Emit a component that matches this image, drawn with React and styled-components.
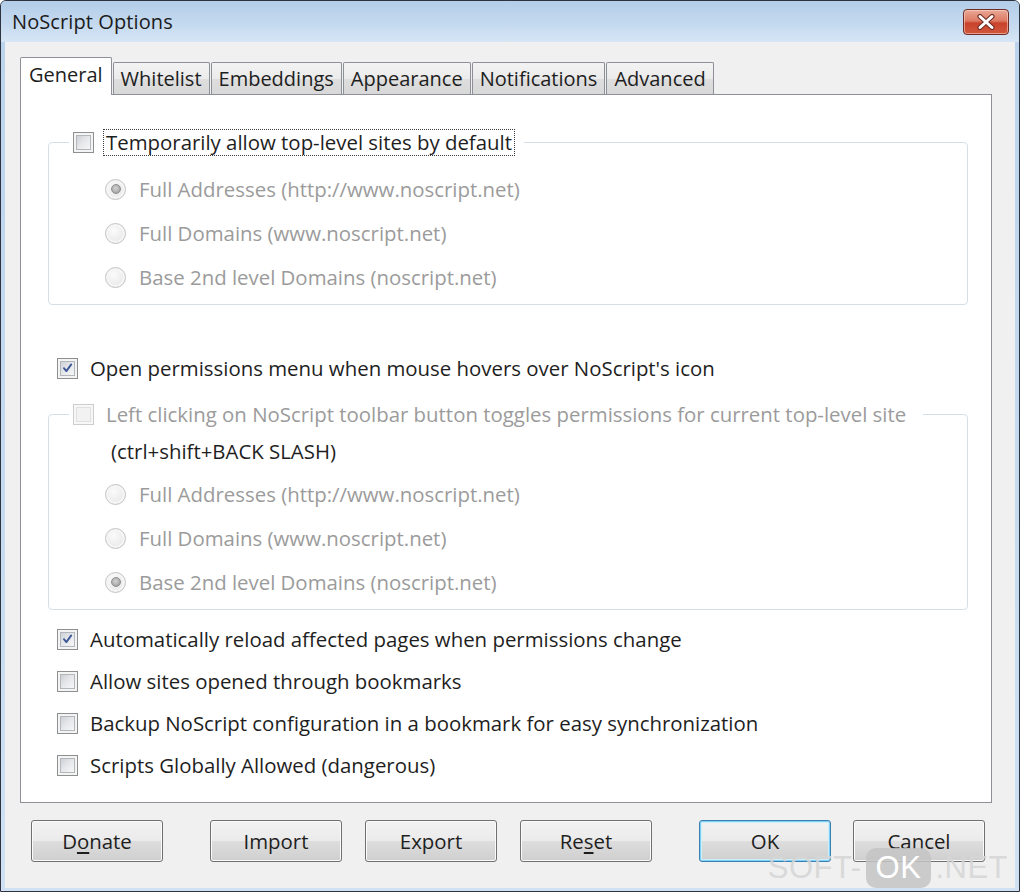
import React from "react";
import styled, { createGlobalStyle, css } from "styled-components";

const GlobalStyle = createGlobalStyle`
  html, body {
    margin: 0;
    padding: 0;
    background: #ffffff;
  }
  * {
    box-sizing: border-box;
  }
`;

const UI_FONT = `"Open Sans", "Noto Sans", "DejaVu Sans", sans-serif`;

const Check = ({ checked, disabled }) => (
  <CheckBox $disabled={disabled}>
    <CheckInner $disabled={disabled}>
      {checked && (
        <svg width="16" height="16" viewBox="0 0 16 16">
          <path
            d="M3.6 8.2 L6.6 11.8 L12.6 3.6"
            fill="none"
            stroke="#3d5796"
            strokeWidth="2.3"
            strokeLinecap="round"
            strokeLinejoin="round"
          />
        </svg>
      )}
    </CheckInner>
  </CheckBox>
);

const RadioRow = ({ selected, children }) => (
  <OptionRow>
    <Radio>{selected && <RadioDot />}</Radio>
    <Label $muted>{children}</Label>
  </OptionRow>
);

const App = () => {
  return (
    <>
      <GlobalStyle />
      <Window>
        <TitleBar>
          <Title>NoScript Options</Title>
          <CloseButton>
            <svg width="24" height="16" viewBox="0 0 24 16">
              <path d="M6 2.5 L18 13.5 M18 2.5 L6 13.5" stroke="#6b2a22" strokeWidth="5" strokeLinecap="round" />
              <path d="M6 2.5 L18 13.5 M18 2.5 L6 13.5" stroke="#ffffff" strokeWidth="3" strokeLinecap="round" />
            </svg>
          </CloseButton>
        </TitleBar>

        <Client>
          <TabStrip>
            <Tab $active>General</Tab>
            <Tab>Whitelist</Tab>
            <Tab>Embeddings</Tab>
            <Tab>Appearance</Tab>
            <Tab>Notifications</Tab>
            <Tab>Advanced</Tab>
          </TabStrip>

          <Panel>
            <GroupBox>
              <Legend $gapRight={10}>
                <Check />
                <Label $focused>Temporarily allow top-level sites by default</Label>
              </Legend>
              <Options $top={12}>
                <RadioRow selected>Full Addresses (http://www.noscript.net)</RadioRow>
                <RadioRow>Full Domains (www.noscript.net)</RadioRow>
                <RadioRow>Base 2nd level Domains (noscript.net)</RadioRow>
              </Options>
            </GroupBox>

            <CheckRow $top={42}>
              <Check checked />
              <Label>Open permissions menu when mouse hovers over NoScript's icon</Label>
            </CheckRow>

            <GroupBox $top={25}>
              <Legend $gapRight={15}>
                <Check disabled />
                <Label $muted>
                  Left clicking on NoScript toolbar button toggles permissions for current top-level site
                </Label>
              </Legend>
              <Hotkey>(ctrl+shift+BACK SLASH)</Hotkey>
              <Options $top={3}>
                <RadioRow>Full Addresses (http://www.noscript.net)</RadioRow>
                <RadioRow>Full Domains (www.noscript.net)</RadioRow>
                <RadioRow selected>Base 2nd level Domains (noscript.net)</RadioRow>
              </Options>
            </GroupBox>

            <CheckRow $top={8}>
              <Check checked />
              <Label>Automatically reload affected pages when permissions change</Label>
            </CheckRow>
            <CheckRow>
              <Check />
              <Label>Allow sites opened through bookmarks</Label>
            </CheckRow>
            <CheckRow>
              <Check />
              <Label>Backup NoScript configuration in a bookmark for easy synchronization</Label>
            </CheckRow>
            <CheckRow>
              <Check />
              <Label>Scripts Globally Allowed (dangerous)</Label>
            </CheckRow>
          </Panel>

          <ButtonBar>
            <Button>
              D<u>o</u>nate
            </Button>
            <Button $left={47}>Import</Button>
            <Button $left={23}>Export</Button>
            <Button $left={23}>
              Re<u>s</u>et
            </Button>
            <Button $left={47} $default>
              OK
            </Button>
            <Button $left={22}>Cancel</Button>
          </ButtonBar>
        </Client>

        <Watermark>
          <span>SOFT-</span>
          <WatermarkBox>OK</WatermarkBox>
          <span>.NET</span>
        </Watermark>
      </Window>
    </>
  );
};

export default App;

const Window = styled.div`
  position: relative;
  width: 1020px;
  height: 892px;
  display: flex;
  flex-direction: column;
  border: 1px solid #2d3440;
  border-radius: 6px 6px 0 0;
  background: linear-gradient(#bad3ec, #cfe1f3);
  overflow: hidden;
  font-family: ${UI_FONT};
`;

const TitleBar = styled.div`
  height: 41px;
  flex-shrink: 0;
  display: flex;
  align-items: center;
  justify-content: space-between;
  padding: 0 10px 0 11px;
  background: linear-gradient(#b3cde8 0%, #c4d9ef 55%, #d6e6f5 100%);
`;

const Title = styled.div`
  font-size: 20px;
  color: #1b1b1b;
  letter-spacing: 0.1px;
`;

const CloseButton = styled.div`
  align-self: flex-start;
  margin-top: 8px;
  width: 46px;
  height: 26px;
  display: flex;
  align-items: center;
  justify-content: center;
  border: 1px solid #6e2c24;
  border-radius: 4px;
  background: linear-gradient(#e9a897 0%, #dd7a63 45%, #c9432c 55%, #d0573d 100%);
  box-shadow: inset 0 0 0 1px rgba(255, 220, 210, 0.55);
`;

const Client = styled.div`
  flex: 1;
  margin: 0 4px 3px 4px;
  padding: 15px 0 0 15px;
  display: flex;
  flex-direction: column;
  background: #f0f0f0;
`;

const TabStrip = styled.div`
  height: 37px;
  display: flex;
  align-items: flex-end;
  gap: 1px;
`;

const Tab = styled.div`
  height: 32px;
  padding: 0 7px 1px 7px;
  display: flex;
  align-items: center;
  font-size: 20px;
  color: #1e1e1e;
  border: 1px solid #8d9097;
  border-bottom: none;
  border-radius: 2px 2px 0 0;
  background: linear-gradient(#f3f3f3 0%, #ebebeb 50%, #dedede 51%, #d8d8d8 100%);

  ${(p) =>
    p.$active &&
    css`
      position: relative;
      z-index: 1;
      height: 38px;
      margin-bottom: -1px;
      padding: 0 8px 4px 8px;
      background: #ffffff;
    `}
`;

const Panel = styled.div`
  width: 972px;
  height: 709px;
  padding: 47px 23px 0 27px;
  display: flex;
  flex-direction: column;
  border: 1px solid #8d9097;
  background: #ffffff;
`;

const GroupBox = styled.div`
  margin-top: ${(p) => p.$top || 0}px;
  padding-bottom: 5px;
  display: flex;
  flex-direction: column;
  border: 1px solid #d6dfe6;
  border-radius: 4px;
`;

const Legend = styled.div`
  align-self: flex-start;
  height: 26px;
  margin: -14px 0 0 20px;
  padding: 0 ${(p) => p.$gapRight}px 0 4px;
  display: flex;
  align-items: center;
  gap: 10px;
  background: #ffffff;
`;

const Options = styled.div`
  margin-top: ${(p) => p.$top}px;
  padding-left: 56px;
  display: flex;
  flex-direction: column;
`;

const OptionRow = styled.div`
  height: 44px;
  display: flex;
  align-items: center;
  gap: 11px;
`;

const CheckRow = styled.div`
  height: 42px;
  margin-top: ${(p) => p.$top || 0}px;
  padding-left: 9px;
  display: flex;
  align-items: center;
  gap: 10px;
`;

const Hotkey = styled.div`
  height: 36px;
  margin-top: 6px;
  padding-left: 62px;
  display: flex;
  align-items: center;
  font-size: 20.4px;
  color: #1e1e1e;
`;

const Label = styled.span`
  padding: 1px 2px;
  font-size: 20.4px;
  line-height: 23px;
  white-space: nowrap;
  color: ${(p) => (p.$muted ? "#9b9b9b" : "#1e1e1e")};
  outline: ${(p) => (p.$focused ? "1px dotted #3a3a3a" : "none")};
`;

const CheckBox = styled.div`
  width: 21px;
  height: 21px;
  flex-shrink: 0;
  padding: 2px;
  border: 1px solid ${(p) => (p.$disabled ? "#cdcdcd" : "#8e8f8f")};
  background: ${(p) => (p.$disabled ? "#f7f7f7" : "#f4f4f4")};
`;

const CheckInner = styled.div`
  width: 100%;
  height: 100%;
  display: flex;
  align-items: center;
  justify-content: center;
  border: 1px solid ${(p) => (p.$disabled ? "#e0e0e0" : "#b3b6bb")};
  background: ${(p) =>
    p.$disabled
      ? "#f2f2f2"
      : "linear-gradient(135deg, #cdd0d5 0%, #e4e6e9 45%, #f7f7f7 100%)"};
`;

const Radio = styled.div`
  width: 21px;
  height: 21px;
  flex-shrink: 0;
  display: flex;
  align-items: center;
  justify-content: center;
  border-radius: 50%;
  border: 1px solid #c3c3c3;
  background: radial-gradient(circle at 40% 35%, #fbfbfb 0%, #ececec 60%, #dedede 100%);
  box-shadow: inset 0 0 0 2px #f6f6f6;
`;

const RadioDot = styled.div`
  width: 10px;
  height: 10px;
  border-radius: 50%;
  border: 1px solid #8e8e8e;
  background: radial-gradient(circle at 45% 40%, #d4d4d4 0%, #a7a7a7 70%, #8f8f8f 100%);
`;

const ButtonBar = styled.div`
  margin-top: 17px;
  padding-left: 11px;
  display: flex;
`;

const Button = styled.div`
  width: 132px;
  height: 42px;
  margin-left: ${(p) => p.$left || 0}px;
  display: flex;
  align-items: center;
  justify-content: center;
  font-size: 20.4px;
  color: #1e1e1e;
  border: 1px solid ${(p) => (p.$default ? "#3c7fb1" : "#707070")};
  border-radius: 3px;
  background: linear-gradient(#f2f2f2 0%, #ebebeb 49%, #dddddd 51%, #cfcfcf 100%);
  box-shadow: ${(p) =>
    p.$default ? "inset 0 0 0 1px #7fd0f4, inset 0 0 0 2px #cdeefb" : "inset 0 0 0 1px #fbfbfb"};

  u {
    text-underline-offset: 3px;
  }
`;

const Watermark = styled.div`
  position: absolute;
  right: 11px;
  bottom: 3px;
  display: flex;
  align-items: center;
  gap: 4px;
  font-family: "Liberation Sans", Arial, sans-serif;
  font-size: 31px;
  color: rgba(214, 214, 214, 0.9);
  letter-spacing: 0.5px;
`;

const WatermarkBox = styled.span`
  padding: 2px 10px;
  border-radius: 10px;
  background: rgba(196, 196, 196, 0.85);
  color: #ffffff;
`;
